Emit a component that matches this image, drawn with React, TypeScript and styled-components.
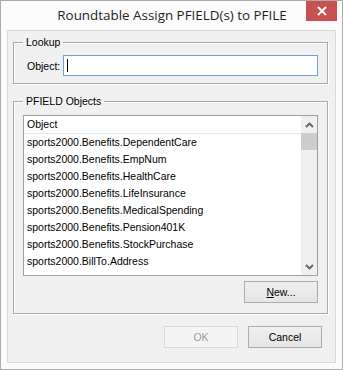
import React from 'react'
import styled, { createGlobalStyle } from 'styled-components'

const GlobalStyle = createGlobalStyle`
  html, body {
    margin: 0;
    padding: 0;
    background: #ffffff;
  }
  body {
    font-family: 'Liberation Sans', Arial, sans-serif;
    font-size: 10.5px;
    color: #000000;
  }
`

const items = [
  'sports2000.Benefits.DependentCare',
  'sports2000.Benefits.EmpNum',
  'sports2000.Benefits.HealthCare',
  'sports2000.Benefits.LifeInsurance',
  'sports2000.Benefits.MedicalSpending',
  'sports2000.Benefits.Pension401K',
  'sports2000.Benefits.StockPurchase',
  'sports2000.BillTo.Address',
]

const Chevron = ({ down = false }: { down?: boolean }) => (
  <svg width="9" height="6" viewBox="0 0 9 6">
    <path
      d={down ? 'M1 1 L4.5 4.5 L8 1' : 'M1 5 L4.5 1.5 L8 5'}
      fill="none"
      stroke="#606060"
      strokeWidth="1.8"
    />
  </svg>
)

export default function App() {
  return (
    <>
      <GlobalStyle />
      <Window>
        <TitleBar>
          <span />
          <Title>Roundtable Assign PFIELD(s) to PFILE</Title>
          <CloseButton type="button" title="Close">
            <svg width="10" height="10" viewBox="0 0 10 10">
              <path d="M1 1 L9 9 M9 1 L1 9" stroke="#ffffff" strokeWidth="2" />
            </svg>
          </CloseButton>
        </TitleBar>
        <Client>
          <Group $mt={5}>
            <Legend>Lookup</Legend>
            <LookupRow>
              <FieldLabel>Object:</FieldLabel>
              <TextBox>
                <Caret />
              </TextBox>
            </LookupRow>
          </Group>
          <Group $mt={11}>
            <Legend>PFIELD Objects</Legend>
            <ObjectsBody>
              <ListBox>
                <ListContent>
                  <ListHeader>Object</ListHeader>
                  {items.map((item) => (
                    <ListRow key={item}>{item}</ListRow>
                  ))}
                </ListContent>
                <ScrollBar>
                  <ScrollArrow>
                    <Chevron />
                  </ScrollArrow>
                  <Thumb />
                  <Track />
                  <ScrollArrow>
                    <Chevron down />
                  </ScrollArrow>
                </ScrollBar>
              </ListBox>
              <NewRow>
                <Button type="button">
                  <u>N</u>ew...
                </Button>
              </NewRow>
            </ObjectsBody>
          </Group>
          <DialogButtons>
            <Button type="button" disabled>
              OK
            </Button>
            <Button type="button">Cancel</Button>
          </DialogButtons>
        </Client>
      </Window>
    </>
  )
}

const Window = styled.div`
  box-sizing: border-box;
  display: flex;
  flex-direction: column;
  width: 343px;
  height: 370px;
  padding: 0 6px 6px;
  border: 1px solid #ababab;
  background: #fbfbfb;
`

const TitleBar = styled.div`
  display: grid;
  grid-template-columns: 1fr auto 1fr;
  align-items: start;
  height: 29px;
  margin: 0 -1px 0 0;
`

const Title = styled.div`
  font-family: 'Open Sans', 'Noto Sans', sans-serif;
  font-size: 13.4px;
  line-height: 18px;
  padding-top: 5px;
  color: #1e1e1e;
  white-space: nowrap;
`

const CloseButton = styled.button`
  justify-self: end;
  display: flex;
  align-items: center;
  justify-content: center;
  width: 31px;
  height: 20px;
  margin: 0;
  padding: 0;
  border: 0;
  background: #c75050;
  cursor: pointer;
`

const Client = styled.div`
  box-sizing: border-box;
  flex: 1;
  display: flex;
  flex-direction: column;
  padding: 0 7px 0 5px;
  border: 1px solid #d9d9d9;
  background: #f0f0f0;
`

const Group = styled.fieldset<{ $mt: number }>`
  margin: ${({ $mt }) => $mt}px 0 0;
  padding: 0;
  border: 1px solid #a9a9a9;
  box-shadow: inset 1px 1px 0 #ffffff, 1px 1px 0 #ffffff;
`

const Legend = styled.legend`
  margin-left: 9px;
  padding: 0 3px;
  line-height: 13px;
`

const LookupRow = styled.div`
  display: flex;
  align-items: center;
  gap: 3px;
  padding: 6px 9px 7px 13px;
`

const FieldLabel = styled.span`
  white-space: nowrap;
`

const TextBox = styled.div`
  box-sizing: border-box;
  flex: 1;
  display: flex;
  align-items: center;
  height: 21px;
  padding-left: 3px;
  border: 1px solid #6e9fd9;
  background: #ffffff;
`

const Caret = styled.span`
  width: 1px;
  height: 13px;
  background: #000000;
`

const ObjectsBody = styled.div`
  display: flex;
  flex-direction: column;
  padding: 7px 9px 10px 9px;
`

const ListBox = styled.div`
  box-sizing: border-box;
  display: flex;
  height: 161px;
  border: 1px solid #a0a0a0;
  background: #ffffff;
`

const ListContent = styled.div`
  flex: 1;
  overflow: hidden;
`

const ListHeader = styled.div`
  height: 17px;
  line-height: 17px;
  padding-left: 3px;
  border-bottom: 1px solid #e3e8ef;
`

const ListRow = styled.div`
  height: 17px;
  line-height: 17px;
  padding-left: 3px;
  white-space: nowrap;
`

const ScrollBar = styled.div`
  display: flex;
  flex-direction: column;
  width: 16px;
  background: #f0f0f0;
`

const ScrollArrow = styled.div`
  display: flex;
  align-items: center;
  justify-content: center;
  height: 17px;
`

const Thumb = styled.div`
  height: 17px;
  background: #cdcdcd;
`

const Track = styled.div`
  flex: 1;
`

const NewRow = styled.div`
  display: flex;
  justify-content: flex-end;
  margin-top: 5px;
`

const Button = styled.button`
  box-sizing: border-box;
  width: 74px;
  height: 22px;
  margin: 0;
  padding: 0;
  font-family: inherit;
  font-size: 10.5px;
  color: #000000;
  border: 1px solid #acacac;
  background: linear-gradient(#f0f0f0, #e5e5e5);
  cursor: pointer;

  &:disabled {
    color: #9a9a9a;
    border-color: #d9d9d9;
    background: #f4f4f4;
    cursor: default;
  }
`

const DialogButtons = styled.div`
  display: flex;
  justify-content: flex-end;
  gap: 10px;
  margin-top: 12px;
  padding-right: 6px;
`
